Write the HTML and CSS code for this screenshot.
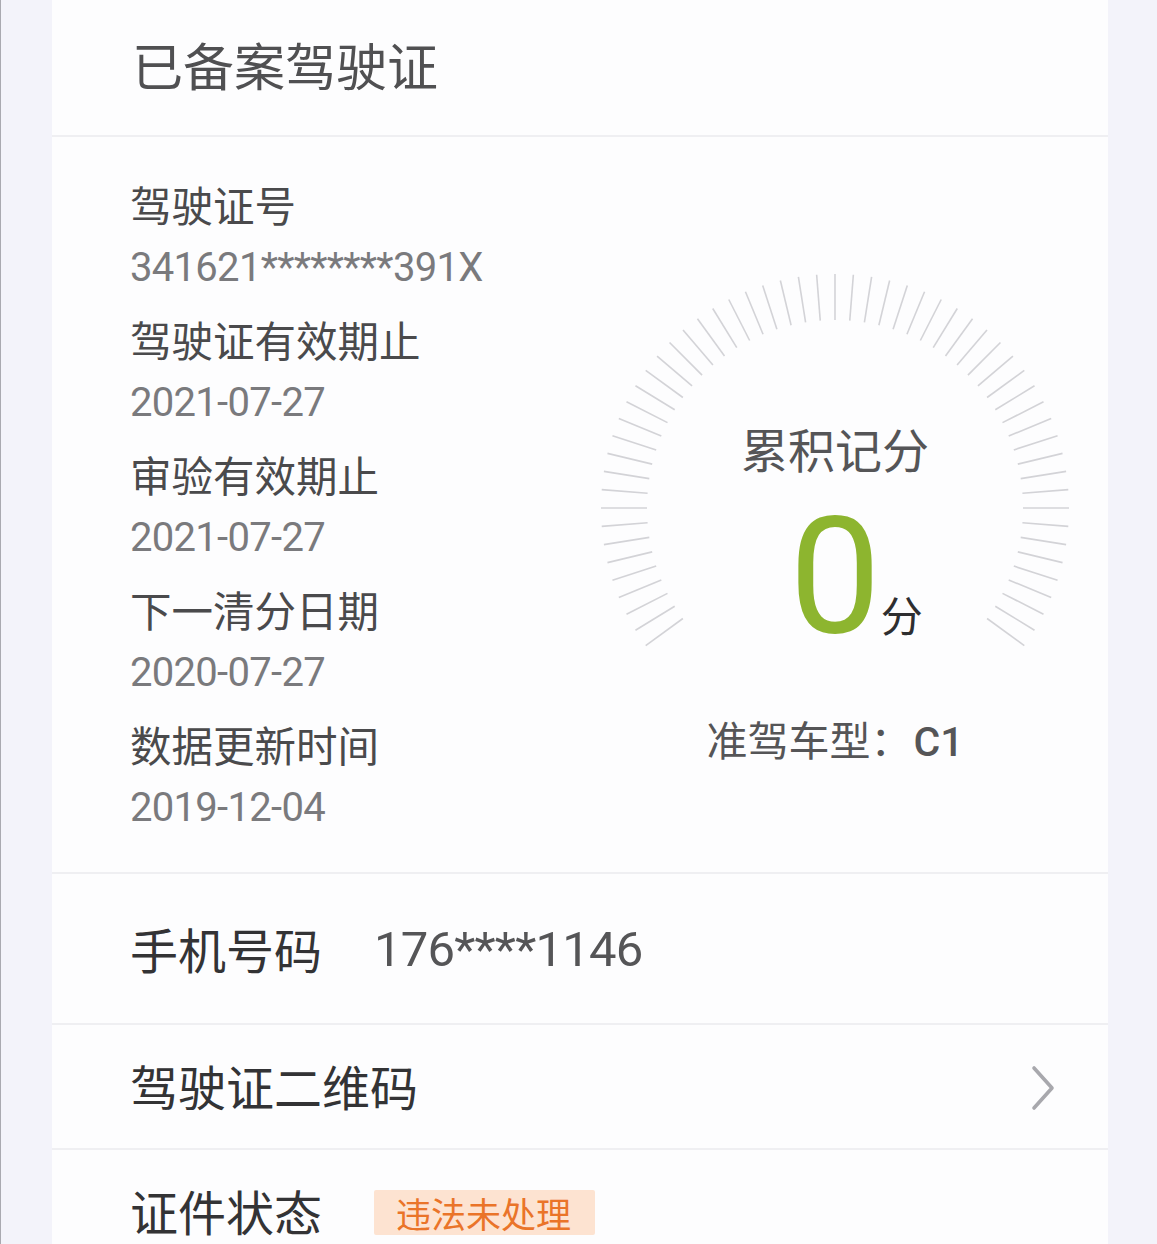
FILE: index.html
```html
<!DOCTYPE html>
<html lang="zh-CN">
<head>
<meta charset="utf-8">
<title>已备案驾驶证</title>
<link rel="stylesheet" href="styles.css">
</head>
<body>
<div class="page">
  <div class="card">
    <header class="head">
      <h1 class="title">已备案驾驶证</h1>
    </header>

    <section class="info">
      <div class="fields">
        <div class="field">
          <div class="label">驾驶证号</div>
          <div class="value">341621********391X</div>
        </div>
        <div class="field">
          <div class="label">驾驶证有效期止</div>
          <div class="value">2021-07-27</div>
        </div>
        <div class="field">
          <div class="label">审验有效期止</div>
          <div class="value">2021-07-27</div>
        </div>
        <div class="field">
          <div class="label">下一清分日期</div>
          <div class="value">2020-07-27</div>
        </div>
        <div class="field">
          <div class="label">数据更新时间</div>
          <div class="value">2019-12-04</div>
        </div>
      </div>

      <div class="gauge">
        <div class="dial">
          <svg class="ticks" width="500" height="400" viewBox="0 0 500 400">
            <defs>
              <line id="t" x1="250" y1="16" x2="250" y2="62"/>
            </defs>
            <g class="tickset">
              <use href="#t" transform="rotate(-126 250 250)"/>
              <use href="#t" transform="rotate(-121.5 250 250)"/>
              <use href="#t" transform="rotate(-117 250 250)"/>
              <use href="#t" transform="rotate(-112.5 250 250)"/>
              <use href="#t" transform="rotate(-108 250 250)"/>
              <use href="#t" transform="rotate(-103.5 250 250)"/>
              <use href="#t" transform="rotate(-99 250 250)"/>
              <use href="#t" transform="rotate(-94.5 250 250)"/>
              <use href="#t" transform="rotate(-90 250 250)"/>
              <use href="#t" transform="rotate(-85.5 250 250)"/>
              <use href="#t" transform="rotate(-81 250 250)"/>
              <use href="#t" transform="rotate(-76.5 250 250)"/>
              <use href="#t" transform="rotate(-72 250 250)"/>
              <use href="#t" transform="rotate(-67.5 250 250)"/>
              <use href="#t" transform="rotate(-63 250 250)"/>
              <use href="#t" transform="rotate(-58.5 250 250)"/>
              <use href="#t" transform="rotate(-54 250 250)"/>
              <use href="#t" transform="rotate(-49.5 250 250)"/>
              <use href="#t" transform="rotate(-45 250 250)"/>
              <use href="#t" transform="rotate(-40.5 250 250)"/>
              <use href="#t" transform="rotate(-36 250 250)"/>
              <use href="#t" transform="rotate(-31.5 250 250)"/>
              <use href="#t" transform="rotate(-27 250 250)"/>
              <use href="#t" transform="rotate(-22.5 250 250)"/>
              <use href="#t" transform="rotate(-18 250 250)"/>
              <use href="#t" transform="rotate(-13.5 250 250)"/>
              <use href="#t" transform="rotate(-9 250 250)"/>
              <use href="#t" transform="rotate(-4.5 250 250)"/>
              <use href="#t" transform="rotate(0 250 250)"/>
              <use href="#t" transform="rotate(4.5 250 250)"/>
              <use href="#t" transform="rotate(9 250 250)"/>
              <use href="#t" transform="rotate(13.5 250 250)"/>
              <use href="#t" transform="rotate(18 250 250)"/>
              <use href="#t" transform="rotate(22.5 250 250)"/>
              <use href="#t" transform="rotate(27 250 250)"/>
              <use href="#t" transform="rotate(31.5 250 250)"/>
              <use href="#t" transform="rotate(36 250 250)"/>
              <use href="#t" transform="rotate(40.5 250 250)"/>
              <use href="#t" transform="rotate(45 250 250)"/>
              <use href="#t" transform="rotate(49.5 250 250)"/>
              <use href="#t" transform="rotate(54 250 250)"/>
              <use href="#t" transform="rotate(58.5 250 250)"/>
              <use href="#t" transform="rotate(63 250 250)"/>
              <use href="#t" transform="rotate(67.5 250 250)"/>
              <use href="#t" transform="rotate(72 250 250)"/>
              <use href="#t" transform="rotate(76.5 250 250)"/>
              <use href="#t" transform="rotate(81 250 250)"/>
              <use href="#t" transform="rotate(85.5 250 250)"/>
              <use href="#t" transform="rotate(90 250 250)"/>
              <use href="#t" transform="rotate(94.5 250 250)"/>
              <use href="#t" transform="rotate(99 250 250)"/>
              <use href="#t" transform="rotate(103.5 250 250)"/>
              <use href="#t" transform="rotate(108 250 250)"/>
              <use href="#t" transform="rotate(112.5 250 250)"/>
              <use href="#t" transform="rotate(117 250 250)"/>
              <use href="#t" transform="rotate(121.5 250 250)"/>
              <use href="#t" transform="rotate(126 250 250)"/>
            </g>
          </svg>
          <div class="readout">
            <div class="readout-title">累积记分</div>
            <div class="score">
              <span class="score-num">0</span><span class="score-unit">分</span>
            </div>
          </div>
        </div>
        <div class="class-line">准驾车型：<span class="class-code">C1</span></div>
      </div>
    </section>

    <div class="row row-phone">
      <span class="row-label">手机号码</span>
      <span class="phone">176****1146</span>
    </div>

    <div class="row row-qr">
      <span class="row-label">驾驶证二维码</span>
      <svg class="chevron" width="28" height="48" viewBox="0 0 28 48">
        <path d="M5 4 L23 24 L5 44" fill="none" stroke="#a8a8ad" stroke-width="3.6" stroke-linecap="round" stroke-linejoin="round"/>
      </svg>
    </div>

    <div class="row row-status">
      <span class="row-label">证件状态</span>
      <span class="badge">违法未处理</span>
    </div>
  </div>
</div>
</body>
</html>
```

FILE: styles.css
```css
html, body {
  margin: 0;
  padding: 0;
}

body {
  background: #f3f3fa;
  font-family: "Noto Sans CJK SC", "Noto Sans", sans-serif;
  overflow: hidden;
}

.page {
  border-left: 1px solid #a9a9b0;
  padding-left: 51px;
  padding-right: 49px;
  height: 1244px;
}

.card {
  background: #fdfdfe;
  width: 1056px;
  height: 1244px;
}

.head {
  height: 135px;
  box-sizing: border-box;
  padding: 0 0 8px 80px;
  display: flex;
  align-items: center;
}

.title {
  margin: 0;
  font-size: 51px;
  line-height: 60px;
  font-weight: 400;
  color: #505052;
}

.info {
  display: flex;
  height: 737px;
  box-sizing: border-box;
  border-top: 2px solid #efeff2;
}

.fields {
  flex: 1;
  padding: 42px 0 0 78px;
}

.field {
  margin-bottom: 8px;
}

.label {
  font-size: 41.5px;
  line-height: 50px;
  color: #4a4a4c;
}

.value {
  font-family: Roboto, "Noto Sans CJK SC", sans-serif;
  font-size: 40px;
  line-height: 77px;
  letter-spacing: -0.7px;
  color: #7a7a7d;
}

.gauge {
  width: 500px;
  margin-right: 23px;
  padding-top: 121px;
  display: flex;
  flex-direction: column;
  align-items: center;
}

.dial {
  display: grid;
  width: 500px;
}

.ticks {
  grid-area: 1 / 1;
  display: block;
}

.tickset use {
  stroke: #d3d3d7;
  stroke-width: 1.6;
}

.readout {
  grid-area: 1 / 1;
  padding-top: 160px;
  display: flex;
  flex-direction: column;
  align-items: center;
}

.readout-title {
  font-size: 47px;
  line-height: 60px;
  color: #555557;
}

.score {
  margin-top: 17px;
  display: flex;
  align-items: baseline;
  justify-content: center;
  padding-left: 42px;
}

.score-num {
  font-family: Roboto, sans-serif;
  font-size: 163px;
  line-height: 163px;
  color: #8db52f;
}

.score-unit {
  font-size: 42px;
  color: #2e2e30;
}

.class-line {
  margin-top: 50px;
  font-size: 41px;
  line-height: 60px;
  color: #555557;
}

.class-code {
  font-family: Roboto, sans-serif;
  font-weight: 500;
  margin-left: 2px;
}

.row {
  display: flex;
  align-items: center;
  box-sizing: border-box;
  border-top: 2px solid #efeff2;
  padding-left: 78px;
}

.row-label {
  font-size: 48px;
  line-height: 60px;
  color: #333335;
}

.row-phone {
  height: 151px;
  padding-bottom: 2px;
}

.phone {
  font-family: Roboto, sans-serif;
  font-size: 49px;
  line-height: 60px;
  letter-spacing: -0.8px;
  color: #555557;
  margin-left: 52px;
  padding-top: 5px;
}

.row-qr {
  height: 125px;
  padding-bottom: 4px;
  justify-content: space-between;
  padding-right: 51px;
}

.chevron {
  display: block;
  margin-top: 6px;
}

.row-status {
  height: 126px;
  padding-bottom: 5px;
}

.badge {
  margin-left: 52px;
  margin-top: 6px;
  background: #fde3d1;
  color: #ea7429;
  font-size: 35px;
  line-height: 45px;
  padding: 0 24px 0 22px;
  border-radius: 2px;
}
```
